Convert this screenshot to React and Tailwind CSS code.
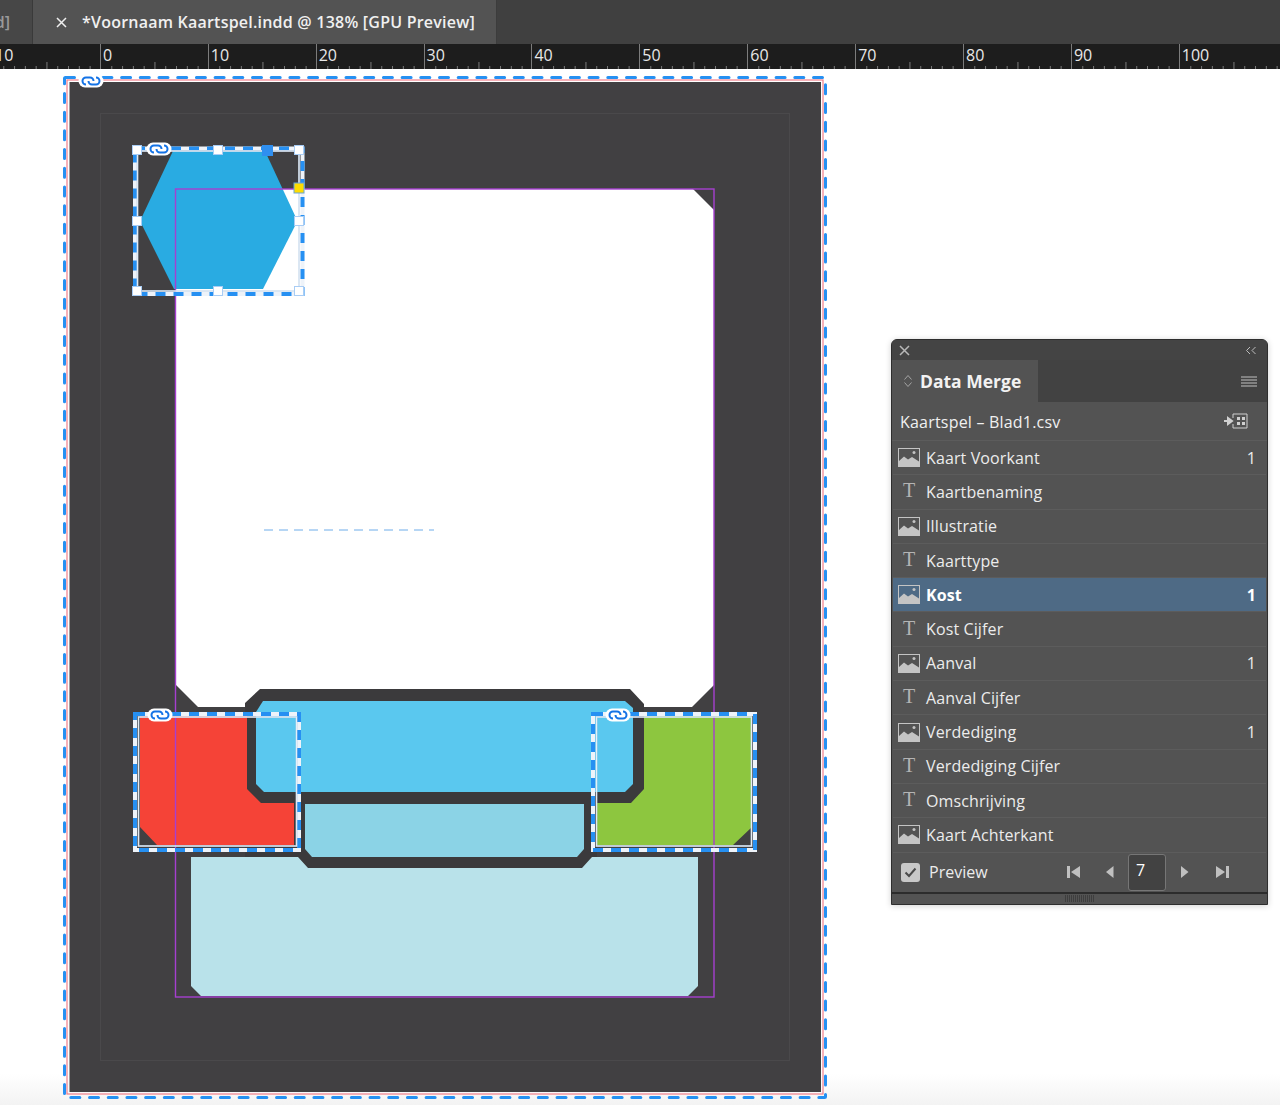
import React from 'react';

const RULER_LABELS = ['10', '0', '10', '20', '30', '40', '50', '60', '70', '80', '90', '100'];

const ROWS = [
    { type: 'image', label: 'Kaart Voorkant', count: '1' },
    { type: 'text', label: 'Kaartbenaming' },
    { type: 'image', label: 'Illustratie' },
    { type: 'text', label: 'Kaarttype' },
    { type: 'image', label: 'Kost', count: '1', active: true },
    { type: 'text', label: 'Kost Cijfer' },
    { type: 'image', label: 'Aanval', count: '1' },
    { type: 'text', label: 'Aanval Cijfer' },
    { type: 'image', label: 'Verdediging', count: '1' },
    { type: 'text', label: 'Verdediging Cijfer' },
    { type: 'text', label: 'Omschrijving' },
    { type: 'image', label: 'Kaart Achterkant' },
];

// Minor ruler ticks for one 10 unit cell
const RulerTicks = () => (
    <svg className="absolute left-0 bottom-0" width="108" height="8" viewBox="0 0 108 8">
        {[1, 2, 3, 4, 5, 6, 7, 8, 9].map(i => (
            <line key={i} x1={i * 10.79} x2={i * 10.79} y1={i === 5 ? 1 : 5} y2="8" stroke="#7c7c7c" strokeWidth="1" />
        ))}
    </svg>
);

const TabBar = () => (
    <div className="flex h-[44px] shrink-0 bg-[#404040]">
        <div className="w-[33px] flex items-center justify-end overflow-hidden bg-[#474747] border-r border-[#3a3a3a]">
            <span className="text-[16px] font-semibold text-[#9a9a9a] pr-[22px] whitespace-nowrap">d]</span>
        </div>
        <div className="w-[464px] flex items-center bg-[#535353] border-r border-[#3c3c3c]">
            <svg className="ml-[23px]" width="11" height="11" viewBox="0 0 11 11">
                <path d="M1 1 L10 10 M10 1 L1 10" stroke="#efefef" strokeWidth="1.5" />
            </svg>
            <span className="ml-[15px] text-[16px] font-semibold text-[#f0f0f0] whitespace-nowrap tracking-[0.22px]">*Voornaam Kaartspel.indd @ 138% [GPU Preview]</span>
        </div>
    </div>
);

const Ruler = () => (
    <div className="flex h-[25px] shrink-0 bg-[#1d1d1d] overflow-hidden">
        <div className="flex -ml-[8px] shrink-0">
            {RULER_LABELS.map((label, i) => (
                <div key={i} className="relative w-[107.9px] h-[25px] shrink-0 border-l border-[#7c7c7c]">
                    <span className="absolute left-[2px] top-[0px] text-[16px] leading-[22px] text-[#e8e8e8]">{label}</span>
                    <RulerTicks />
                </div>
            ))}
        </div>
    </div>
);

const LinkPill = ({ x, y }) => (
    <g transform={`translate(${x} ${y})`}>
        <rect x="-12.5" y="-6.5" width="25" height="13" rx="6.5" fill="#ffffff" />
        <path d="M-5 3.5 A3.5 3.5 0 0 1 -5 -3.5 H-1 A3.5 3.5 0 0 1 2.5 0" fill="none" stroke="#1473e6" strokeWidth="2" />
        <path d="M5 -3.5 A3.5 3.5 0 0 1 5 3.5 H1 A3.5 3.5 0 0 1 -2.5 0" fill="none" stroke="#1473e6" strokeWidth="2" />
    </g>
);

const Frame = ({ x, y, w, h, ix, iy, iw, ih }) => (
    <g fill="none">
        <rect x={x} y={y} width={w} height={h} stroke="#eef3f9" strokeWidth="4" />
        <rect x={x} y={y} width={w} height={h} stroke="#2690f2" strokeWidth="4" strokeDasharray="10 8" />
        <rect x={ix} y={iy} width={iw} height={ih} stroke="#bcd0e6" strokeWidth="2" strokeOpacity="0.75" />
        <rect x={ix} y={iy} width={iw} height={ih} stroke="#eef5fb" strokeWidth="1" strokeOpacity="0.85" />
    </g>
);

const Handle = ({ x, y }) => (
    <rect x={x - 4.5} y={y - 4.5} width="9" height="9" fill="#ffffff" stroke="#a9cdf5" strokeWidth="1" />
);

// The InDesign page: everything here sits on a free canvas
const Artwork = () => (
    <svg className="absolute left-0 top-0" width="880" height="1036" viewBox="0 69 880 1036">
        <rect x="69.5" y="82" width="751.5" height="1010" fill="#414042" />
        <rect x="100.5" y="113.5" width="689" height="947" fill="none" stroke="#4a494b" strokeWidth="1" />

        {/* card */}
        <polygon points="176,189 693,189 714,210 714,685 692,707 198,707 176,685" fill="#ffffff" />
        <polygon points="245,707 245,703 260,689 630,689 644,704 644,789 631,803 597,803 597,857 592,857 582,868 308,868 298,857 245,857" fill="#3b3a3c" />
        <polygon points="263,701 625,701 633,708 633,784 625,792 264,792 256,784 256,712" fill="#5ac8ef" />
        <polygon points="305,804 584,804 584,849 577,857 312,857 305,849" fill="#8bd3e6" />
        <polygon points="191,857 298,857 308,868 582,868 592,857 698,857 698,986 688,996 201,996 191,986" fill="#b9e2ea" />
        <polygon points="140,716 247,716 247,789 261,803 294,803 294,845 157,845 140,827" fill="#f54337" />
        <polygon points="644,716 752,716 752,827 733,845 597,845 597,803 631,803 644,789" fill="#8dc63f" />
        <polygon points="173,151 265,151 297.5,221 263,289 174,289 140,221" fill="#29abe2" />

        <line x1="264" x2="434" y1="530" y2="530" stroke="#6fadea" strokeWidth="1" strokeDasharray="9 6" />

        {/* purple frame */}
        <rect x="175.5" y="189" width="538.5" height="808" fill="none" stroke="#a63fd0" strokeWidth="1.4" />

        {/* page edges */}
        <rect x="67" y="80" width="756" height="1014" fill="none" stroke="#f07f8a" strokeWidth="1.2" />
        <rect x="64.5" y="77.5" width="761" height="1020" rx="1" fill="none" stroke="#2690f2" strokeWidth="3" strokeDasharray="9 9.7" strokeLinecap="round" />
        <LinkPill x={91} y={81} />

        {/* selected frames */}
        <Frame x={135} y={148.5} w={167.5} h={145.5} ix={137.5} iy={151} iw={161.5} ih={140} />
        <Frame x={135} y={714} w={164} h={136} ix={138.5} iy={717} iw={158} ih={129} />
        <Frame x={593} y={714} w={162} h={136} ix={596.5} iy={717} iw={155} ih={129} />

        <Handle x={137} y={150} />
        <Handle x={218} y={150} />
        <Handle x={299} y={150} />
        <Handle x={137} y={221} />
        <Handle x={299} y={221} />
        <Handle x={137} y={291} />
        <Handle x={218} y={291} />
        <Handle x={299} y={291} />
        <rect x="262" y="145" width="11" height="11" fill="#2f8ff0" />
        <rect x="294" y="183" width="10" height="10" fill="#ffdd00" stroke="#6aa5d8" strokeWidth="1" />

        <LinkPill x={159} y={149} />
        <LinkPill x={160} y={715} />
        <LinkPill x={618} y={715} />
    </svg>
);

const ImageIcon = ({ active }) => (
    <svg width="22" height="19" viewBox="0 0 22 19" className="shrink-0">
        <rect x="0.5" y="0.5" width="21" height="18" fill={active ? '#4e6a85' : '#535353'} stroke="#c4c4c4" strokeWidth="1" />
        <path d="M1 13 L6 8.5 L10 11.5 L14 9 L21 13.5 L21 18 L1 18 Z" fill="#c4c4c4" />
        <circle cx="16" cy="4.5" r="1.5" fill="#c4c4c4" />
    </svg>
);

const Row = ({ type, label, count, active }) => (
    <div className={`flex items-center h-[34.3px] border-b border-[#5c5c5c] pl-[5px] pr-[10px] ${active ? 'bg-[#4e6a85] font-bold text-white' : 'text-[#ececec]'}`}>
        <div className="w-[22px] flex justify-center shrink-0">
            {type === 'image'
                ? <ImageIcon active={active} />
                : <span className="text-[20px] leading-none text-[#b4b4b4] -mt-[3px]" style={{ fontFamily: '"Liberation Serif", serif' }}>T</span>}
        </div>
        <span className="ml-[6px] text-[16px] flex-1 whitespace-nowrap tracking-[0.12px]">{label}</span>
        {count && <span className="text-[16px]">{count}</span>}
    </div>
);

const NavIcon = ({ d, className }) => (
    <svg width="14" height="14" viewBox="0 0 14 14" className={className}>
        <path d={d} fill="#c0c0c0" />
    </svg>
);

const DataMergePanel = () => (
    <div className="absolute left-[891px] top-[270px] w-[377px] h-[566px] flex flex-col rounded-t-[6px] overflow-hidden border border-[#2e2e2e] bg-[#535353] shadow-[0_1px_6px_rgba(0,0,0,0.18)]">
        <div className="flex items-center justify-between h-[20px] px-[7px] bg-[#444444] shrink-0">
            <svg width="11" height="11" viewBox="0 0 11 11">
                <path d="M1 1 L10 10 M10 1 L1 10" stroke="#b8b8b8" strokeWidth="1.5" />
            </svg>
            <svg width="12" height="9" viewBox="0 0 12 9" className="mr-[3px]">
                <path d="M5 1 L1.5 4.5 L5 8 M10.5 1 L7 4.5 L10.5 8" stroke="#bdbdbd" strokeWidth="1" fill="none" />
            </svg>
        </div>
        <div className="flex items-stretch h-[42px] bg-[#424242] shrink-0">
            <div className="w-[146px] flex items-center pl-[11px] bg-[#535353]">
                <svg width="10" height="14" viewBox="0 0 10 14">
                    <path d="M1.5 5.5 L5 1.5 L8.5 5.5 M1.5 8.5 L5 12.5 L8.5 8.5" stroke="#a4a4a4" strokeWidth="1" fill="none" />
                </svg>
                <span className="ml-[7px] text-[17.5px] font-bold text-[#f2f2f2]">Data Merge</span>
            </div>
            <div className="flex-1 flex items-center justify-end pr-[10px]">
                <svg width="16" height="11" viewBox="0 0 16 11">
                    <path d="M0 1 H16 M0 4 H16 M0 7 H16 M0 10 H16" stroke="#c0c0c0" strokeWidth="1" />
                </svg>
            </div>
        </div>
        <div className="flex items-center justify-between h-[39px] pl-[8px] pr-[19px] border-b border-[#5c5c5c] shrink-0">
            <span className="text-[16px] text-[#f0f0f0] tracking-[0.2px] mt-[2px]">Kaartspel – Blad1.csv</span>
            <svg width="24" height="16" viewBox="0 0 24 16">
                <path d="M0 8 H6 M4 5 L8 8 L4 11 Z" stroke="#d0d0d0" strokeWidth="2" fill="#d0d0d0" />
                <path d="M9 1 H23 V15 H9 V11" stroke="#d0d0d0" strokeWidth="1" fill="none" />
                <path d="M9 1 V5" stroke="#d0d0d0" strokeWidth="1" />
                <path d="M13 4 H16 V7 H13 Z M18 4 H21 V7 H18 Z M13 9 H16 V12 H13 Z M18 9 H21 V12 H18 Z" fill="#d0d0d0" />
            </svg>
        </div>
        <div className="flex flex-col shrink-0 px-[1px]">
            {ROWS.map(row => <Row key={row.label} {...row} />)}
        </div>
        <div className="flex items-center h-[39.4px] shrink-0 pl-[9px]">
            <div className="w-[19px] h-[19px] rounded-[3px] bg-[#c8c8c8] flex items-center justify-center">
                <svg width="13" height="11" viewBox="0 0 13 11">
                    <path d="M1.5 5.5 L5 9 L11.5 1.5" stroke="#4a4a4a" strokeWidth="2" fill="none" />
                </svg>
            </div>
            <span className="ml-[9px] text-[16px] text-[#ececec] w-[138px]">Preview</span>
            <NavIcon d="M0 1 H3 V13 H0 Z M13 1 V13 L4 7 Z" />
            <NavIcon className="ml-[23px]" d="M9.5 1 V13 L2 7 Z" />
            <div className="ml-[10px] w-[38px] h-[37px] rounded-[3px] bg-[#424242] border border-[#767676] pl-[7px] text-[16px] leading-[31px] text-white">7</div>
            <NavIcon className="ml-[11px]" d="M4 1 V13 L11.5 7 Z" />
            <NavIcon className="ml-[24px]" d="M1 1 V13 L10 7 Z M11 1 H14 V13 H11 Z" />
        </div>
        <div className="h-[2px] bg-[#2c2c2c] shrink-0" />
        <div className="flex-1 flex items-center justify-center bg-[#535353]">
            <svg width="30" height="7" viewBox="0 0 30 7">
                {Array.from({ length: 15 }).map((_, i) => (
                    <line key={i} x1={i * 2 + 0.5} x2={i * 2 + 0.5} y1="0" y2="7" stroke="#3e3e3e" strokeWidth="1" />
                ))}
            </svg>
        </div>
    </div>
);

export default function App() {
    return (
        <div className="w-[1280px] h-[1105px] flex flex-col overflow-hidden bg-white" style={{ fontFamily: '"Open Sans", sans-serif' }}>
            <TabBar />
            <Ruler />
            <div className="relative flex-1 bg-gradient-to-b from-white from-[97%] to-[#f3f3f3]">
                <Artwork />
                <DataMergePanel />
            </div>
        </div>
    );
}
